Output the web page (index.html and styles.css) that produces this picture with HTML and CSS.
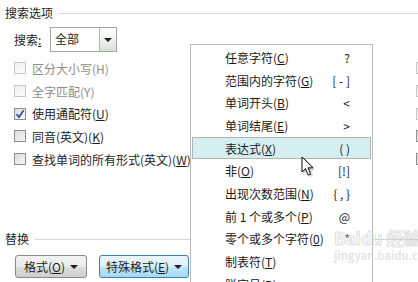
FILE: index.html
```html
<!DOCTYPE html>
<html lang="zh-CN">
<head>
  <meta charset="UTF-8">
  <title>查找和替换 - 特殊格式</title>
  <link rel="stylesheet" href="styles.css">
</head>
<body>
  <div class="dialog">
    <!-- 搜索选项 -->
    <div class="legend">
      <span>搜索选项</span>
      <span class="legend-line"></span>
    </div>

    <div class="search-row">
      <span class="search-label">搜索<u>:</u></span>
      <div class="select">
        <span class="select-value">全部</span>
        <span class="select-btn"><span class="tri"></span></span>
      </div>
    </div>

    <div class="options">
      <div class="opt disabled"><span class="box"></span><span>区分大小写(H)</span></div>
      <div class="opt-right"><span class="box light"></span></div>
      <div class="opt disabled"><span class="box"></span><span>全字匹配(Y)</span></div>
      <div class="opt-right"><span class="box light"></span></div>
      <div class="opt">
        <span class="box">
          <svg width="10" height="10" viewBox="0 0 10 10"><path d="M1.5 5.2 L4 8 L8.6 1.2" fill="none" stroke="#2f4f96" stroke-width="1.7"/></svg>
        </span>
        <span>使用通配符(<u>U</u>)</span>
      </div>
      <div class="opt-right"><span class="box light"></span></div>
      <div class="opt"><span class="box"></span><span>同音(英文)(<u>K</u>)</span></div>
      <div class="opt-right"><span class="box"></span></div>
      <div class="opt"><span class="box"></span><span>查找单词的所有形式(英文)(<u>W</u>)</span></div>
      <div class="opt-right"><span class="box"></span></div>
    </div>

    <!-- 替换 -->
    <div class="replace">
      <div class="legend">
        <span>替换</span>
        <span class="legend-line"></span>
      </div>
      <div class="buttons">
        <button class="btn btn-format"><span>格式(<u>O</u>)</span><span class="tri"></span></button>
        <button class="btn btn-special"><span>特殊格式(<u>E</u>)</span><span class="tri"></span></button>
      </div>
    </div>

    <!-- 特殊格式 menu -->
    <ul class="menu">
      <li><span>任意字符(<u>C</u>)</span><span class="key">?</span></li>
      <li><span>范围内的字符(<u>G</u>)</span><span class="key">[ - ]</span></li>
      <li><span>单词开头(<u>B</u>)</span><span class="key">&lt;</span></li>
      <li><span>单词结尾(<u>E</u>)</span><span class="key">&gt;</span></li>
      <li class="active"><span>表达式(<u>X</u>)</span><span class="key">( )</span></li>
      <li><span>非(<u>O</u>)</span><span class="key">[!]</span></li>
      <li><span>出现次数范围(<u>N</u>)</span><span class="key">{ , }</span></li>
      <li><span>前 1 个或多个(<u>P</u>)</span><span class="key">@</span></li>
      <li><span>零个或多个字符(<u>0</u>)</span><span class="key">*</span></li>
      <li><span>制表符(<u>T</u>)</span><span class="key"></span></li>
      <li><span>脱字号(<u>R</u>)</span><span class="key"></span></li>
    </ul>

    <div class="watermark">
      <span class="wm-logo">Baidu 经验</span>
      <span class="wm-url">jingyan.baidu.com</span>
    </div>

    <svg class="cursor" width="14" height="22" viewBox="0 0 14 22">
      <path d="M1 1 L1 16 L4.5 12.6 L7.2 19 L9.6 18 L7 11.8 L12 11.8 Z" fill="#fff" stroke="#111" stroke-width="1" stroke-linejoin="round"/>
    </svg>
  </div>
</body>
</html>
```

FILE: styles.css
```css
body {
  margin: 0;
  background-color: #fff;
  font-family: "Noto Sans CJK SC", "Microsoft YaHei", sans-serif;
  font-size: 12px;
  color: #1e1e1e;
  overflow: hidden;
}

u {
  text-decoration: underline;
  text-underline-offset: 1px;
}

.dialog {
  position: relative;
  width: 418px;
  height: 282px;
  box-sizing: border-box;
  padding: 6px 0 4px 5px;
  display: flex;
  flex-direction: column;
  overflow: hidden;
}

/* group titles with the rule to the right */
.legend {
  display: flex;
  align-items: center;
  gap: 6px;
  height: 14px;
  line-height: 14px;
}

.legend-line {
  flex: 1;
  border-top: 1px solid #d5d5db;
}

.search-row {
  display: flex;
  align-items: center;
  gap: 6px;
  margin: 7px 0 0 9px;
}

.search-label {
  width: 30px;
}

.select {
  width: 67px;
  height: 25px;
  box-sizing: border-box;
  border: 1px solid #a6a6a6;
  display: flex;
  align-items: stretch;
  background: #fff;
}

.select-value {
  flex: 1;
  padding-left: 4px;
  line-height: 22px;
}

.select-btn {
  width: 16px;
  border-left: 1px solid #b5b5b5;
  background: linear-gradient(#ffffff, #f0f0f0 50%, #d6e0d6);
  display: flex;
  align-items: center;
  justify-content: center;
}

.tri {
  display: inline-block;
  width: 0;
  height: 0;
  border-left: 4px solid transparent;
  border-right: 4px solid transparent;
  border-top: 4px solid #1e1e1e;
  vertical-align: middle;
}

/* check options */
.options {
  display: grid;
  grid-template-columns: 402px 12px;
  margin: 5px 0 0 9px;
}

.opt,
.opt-right {
  height: 22.7px;
  display: flex;
  align-items: center;
  gap: 6px;
  white-space: nowrap;
}

.opt.disabled {
  color: #8d8d8d;
}

.box {
  width: 12px;
  height: 12px;
  box-sizing: border-box;
  border: 1px solid #8e8f8f;
  background: linear-gradient(135deg, #dcdcdc, #f6f6f6);
  display: flex;
  align-items: center;
  justify-content: center;
  flex-shrink: 0;
}

.opt.disabled .box,
.box.light {
  border-color: #c8c8c8;
  background: linear-gradient(135deg, #f0f0f0, #fbfbfb);
}

.opt .box svg {
  display: block;
}

/* replace section */
.replace {
  margin-top: auto;
}

.buttons {
  display: flex;
  gap: 12px;
  margin: 9px 0 0 10px;
}

.btn {
  height: 23px;
  box-sizing: border-box;
  padding: 0;
  font-family: inherit;
  font-size: 12px;
  color: #1e1e1e;
  border-radius: 3px;
  display: flex;
  align-items: center;
  justify-content: center;
  gap: 5px;
}

.btn-format {
  width: 72px;
  border: 1px solid #8a8a8a;
  background: linear-gradient(#f2f2f2 0%, #ebebeb 50%, #dddddd 51%, #cfcfcf 100%);
}

.btn-special {
  width: 90px;
  border: 1px solid #3c7fb1;
  background: linear-gradient(#eaf6fd 0%, #d9f0fc 50%, #bee6fd 51%, #a7d9f5 100%);
}

.btn .tri {
  border-left-width: 4.5px;
  border-right-width: 4.5px;
  border-top-width: 4.5px;
}

/* dropdown menu */
.menu {
  position: absolute;
  left: 190px;
  top: 44px;
  width: 183px;
  box-sizing: border-box;
  margin: 0;
  padding: 1px;
  list-style: none;
  background: #fff;
  border: 1px solid #bcbcbc;
}

.menu li {
  height: 22.7px;
  box-sizing: border-box;
  border: 1px solid transparent;
  padding: 0 20px 0 32px;
  display: flex;
  align-items: center;
  justify-content: space-between;
  color: #1a1a1a;
  white-space: nowrap;
}

.menu li.active {
  background: #d5eff0;
  border-color: #b4b4b4;
}

.menu .key {
  text-align: right;
}

.watermark {
  position: absolute;
  left: 334px;
  top: 228px;
  display: flex;
  flex-direction: column;
  pointer-events: none;
}

.wm-logo {
  font-size: 17px;
  font-weight: bold;
  color: rgba(255, 255, 255, 0.2);
  -webkit-text-stroke: 1px rgba(200, 200, 200, 0.6);
  line-height: 20px;
}

.wm-url {
  font-size: 11px;
  font-weight: bold;
  color: rgba(210, 210, 210, 0.6);
  line-height: 14px;
}

.cursor {
  position: absolute;
  left: 301px;
  top: 156px;
  filter: drop-shadow(1px 1px 1px rgba(0, 0, 0, 0.35));
}
```
